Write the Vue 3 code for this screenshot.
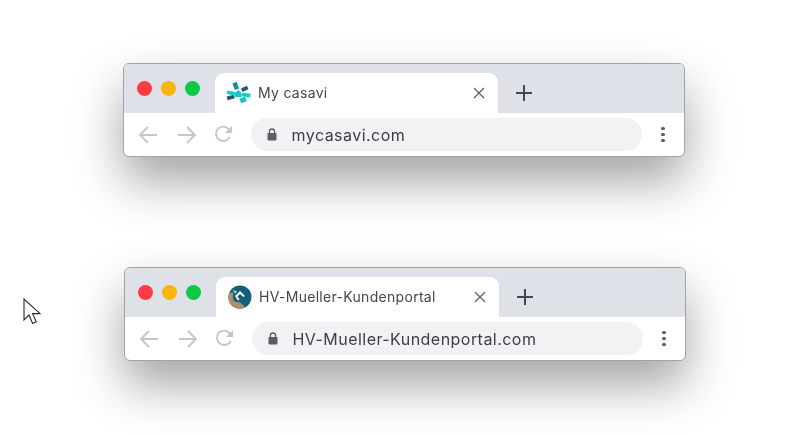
<script setup>
const windows = [
  { title: 'My casavi', url: 'mycasavi.com', logo: 'casavi', shifted: false },
  { title: 'HV-Mueller-Kundenportal', url: 'HV-Mueller-Kundenportal.com', logo: 'mueller', shifted: true }
]
</script>

<template>
  <main class="page">
    <section
      v-for="win in windows"
      :key="win.url"
      class="browser"
      :class="{ shifted: win.shifted }"
    >
      <header class="tabstrip">
        <div class="lights">
          <span class="light red"></span>
          <span class="light amber"></span>
          <span class="light green"></span>
        </div>
        <div class="tab">
          <svg v-if="win.logo === 'casavi'" class="favicon" viewBox="0 0 26 24">
            <g fill="#2f5570">
              <rect x="15.5" y="6" width="6.5" height="3.8" transform="rotate(-25 18.7 8)" />
              <rect x="1" y="14.6" width="7.5" height="3.8" transform="rotate(-15 4.7 16.500)" />
            </g>
            <rect x="7.5" y="1.5" width="4.5" height="7" transform="rotate(-20 9.500 5)" fill="#1c8d9a" />
            <g fill="#16c9c9">
              <rect x="1" y="10.2" width="8" height="3.6" transform="rotate(10 5 12)" />
              <path d="M12.300 9l3.300 3v4H9v-4z" />
              <rect x="16" y="12.200" width="8.500" height="3.600" transform="rotate(8 20 14)" />
              <rect x="14" y="16.500" width="6" height="5" transform="rotate(-20 17 18.700)" />
            </g>
          </svg>
          <svg v-else class="favicon" viewBox="-1 0 26 24">
            <circle cx="12" cy="12" r="11.500" fill="#14607c" />
            <path d="M1 8c-2.500 7 1 13.500 7 15.200 4 1 6.500.5 8.500-.7-1-3.500-4.500-5.500-8-5.500-3.500 0-4.500-5-3-9.500z" fill="#ab8f6c" />
            <path d="M7 11l5-5 5 5-1.500 1-3.500-3-2.500 2.500 2 3-1.500 1z" fill="#fff" />
            <path d="M5 5l4 1.500-2 2z" fill="#cfe3ea" />
          </svg>
          <span class="tab-title">{{ win.title }}</span>
          <svg class="tab-close" viewBox="0 0 12 12">
            <path d="M1 1l10 10M11 1L1 11" />
          </svg>
        </div>
        <svg class="new-tab" viewBox="0 0 18 18">
          <path d="M9 1v16M1 9h16" />
        </svg>
      </header>
      <div class="toolbar">
        <svg class="nav" viewBox="0 0 20 20">
          <path d="M19 10H2M10 2l-8 8 8 8" />
        </svg>
        <svg class="nav forward" viewBox="0 0 20 20">
          <path d="M1 10h17M10 2l8 8-8 8" />
        </svg>
        <svg class="nav reload" viewBox="0 0 20 20">
          <path d="M16.500 12.500A7.600 7.600 0 1 1 15.600 4.600L18 7" />
          <path class="solid" d="M19 1v7.500h-7.500z" />
        </svg>
        <div class="omnibox">
          <svg class="lock" viewBox="0 0 10 13">
            <path d="M2.400 5V3.600a2.600 2.600 0 0 1 5.200 0V5" class="shackle" />
            <rect x="0.500" y="5" width="9" height="7.600" rx="1" />
          </svg>
          <span class="url">{{ win.url }}</span>
        </div>
        <div class="menu">
          <span></span><span></span><span></span>
        </div>
      </div>
    </section>

    <svg class="cursor" viewBox="0 0 20 30">
      <path d="M1 1v21l5-5 3.600 8.400 3.600-1.600-3.600-8.200H17z" />
    </svg>
  </main>
</template>

<style scoped>
.page {
  position: relative;
  width: 812px;
  height: 435px;
  overflow: hidden;
  background: #fff;
  padding: 63px 0 0 123px;
  box-sizing: border-box;
  display: flex;
  flex-direction: column;
  gap: 110px;
  font-family: Inter, Roboto, "Liberation Sans", sans-serif;
}

.browser {
  width: 562px;
  height: 94px;
  box-sizing: border-box;
  border: 1px solid #a3a3a5;
  border-radius: 6px;
  background: #fff;
  overflow: hidden;
  flex-shrink: 0;
  box-shadow: 0 24px 48px rgba(0, 0, 0, 0.36);
  filter: blur(0.35px);
}

.browser.shifted {
  margin-left: 1px;
}

.tabstrip {
  height: 49px;
  background: #dee1e7;
  display: flex;
  align-items: flex-end;
}

.lights {
  display: flex;
  gap: 9px;
  width: 91px;
  align-self: flex-start;
  padding: 17px 0 0 13px;
  box-sizing: border-box;
}

.light {
  width: 15px;
  height: 15px;
  border-radius: 50%;
}

.red { background: #fd3b45; }
.amber { background: #fdb50b; }
.green { background: #0fc843; }

.tab {
  width: 283px;
  height: 40px;
  background: #fff;
  border-radius: 9px 9px 0 0;
  display: flex;
  align-items: center;
  padding: 0 13px 0 11px;
  box-sizing: border-box;
}

.favicon {
  width: 26px;
  height: 24px;
  flex-shrink: 0;
}

.tab-title {
  margin-left: 6px;
  padding-bottom: 2px;
  font-size: 14px;
  letter-spacing: 0.3px;
  color: #45474b;
  flex: 1;
  white-space: nowrap;
}

.tab-close {
  width: 12px;
  height: 12px;
  flex-shrink: 0;
  fill: none;
  stroke: #5f6165;
  stroke-width: 1.3;
}

.new-tab {
  width: 18px;
  height: 18px;
  margin: 0 0 11px 17px;
  fill: none;
  stroke: #45484c;
  stroke-width: 2;
}

.toolbar {
  height: 43px;
  display: flex;
  align-items: center;
  padding: 0 0 0 14px;
  box-sizing: border-box;
}

.nav {
  width: 20px;
  height: 20px;
  flex-shrink: 0;
  margin-right: 19px;
  fill: none;
  stroke: #c5c6c8;
  stroke-width: 2;
}

.nav.forward {
  margin-right: 17px;
}

.nav.reload {
  margin-right: 18px;
  width: 19px;
  height: 19px;
}

.solid {
  fill: #c5c6c8;
  stroke: none;
}

.omnibox {
  width: 391px;
  height: 33px;
  border-radius: 17px;
  background: #f1f2f4;
  display: flex;
  align-items: center;
  padding-left: 16px;
  box-sizing: border-box;
  flex-shrink: 0;
}

.lock {
  width: 10px;
  height: 13px;
  fill: #5c5e62;
  flex-shrink: 0;
}

.shackle {
  fill: none;
  stroke: #5c5e62;
  stroke-width: 1.3;
}

.url {
  margin-left: 14.5px;
  padding-top: 1px;
  font-size: 16px;
  letter-spacing: 0.46px;
  color: #3c3e42;
  white-space: nowrap;
}

.menu {
  display: flex;
  flex-direction: column;
  gap: 2.5px;
  margin-left: 19px;
}

.menu span {
  width: 3.5px;
  height: 3.5px;
  border-radius: 50%;
  background: #5c5e62;
}

.cursor {
  position: absolute;
  left: 23px;
  top: 298px;
  width: 20px;
  height: 30px;
  fill: #fff;
  stroke: #2b2b2b;
  stroke-width: 1.1;
}
</style>
